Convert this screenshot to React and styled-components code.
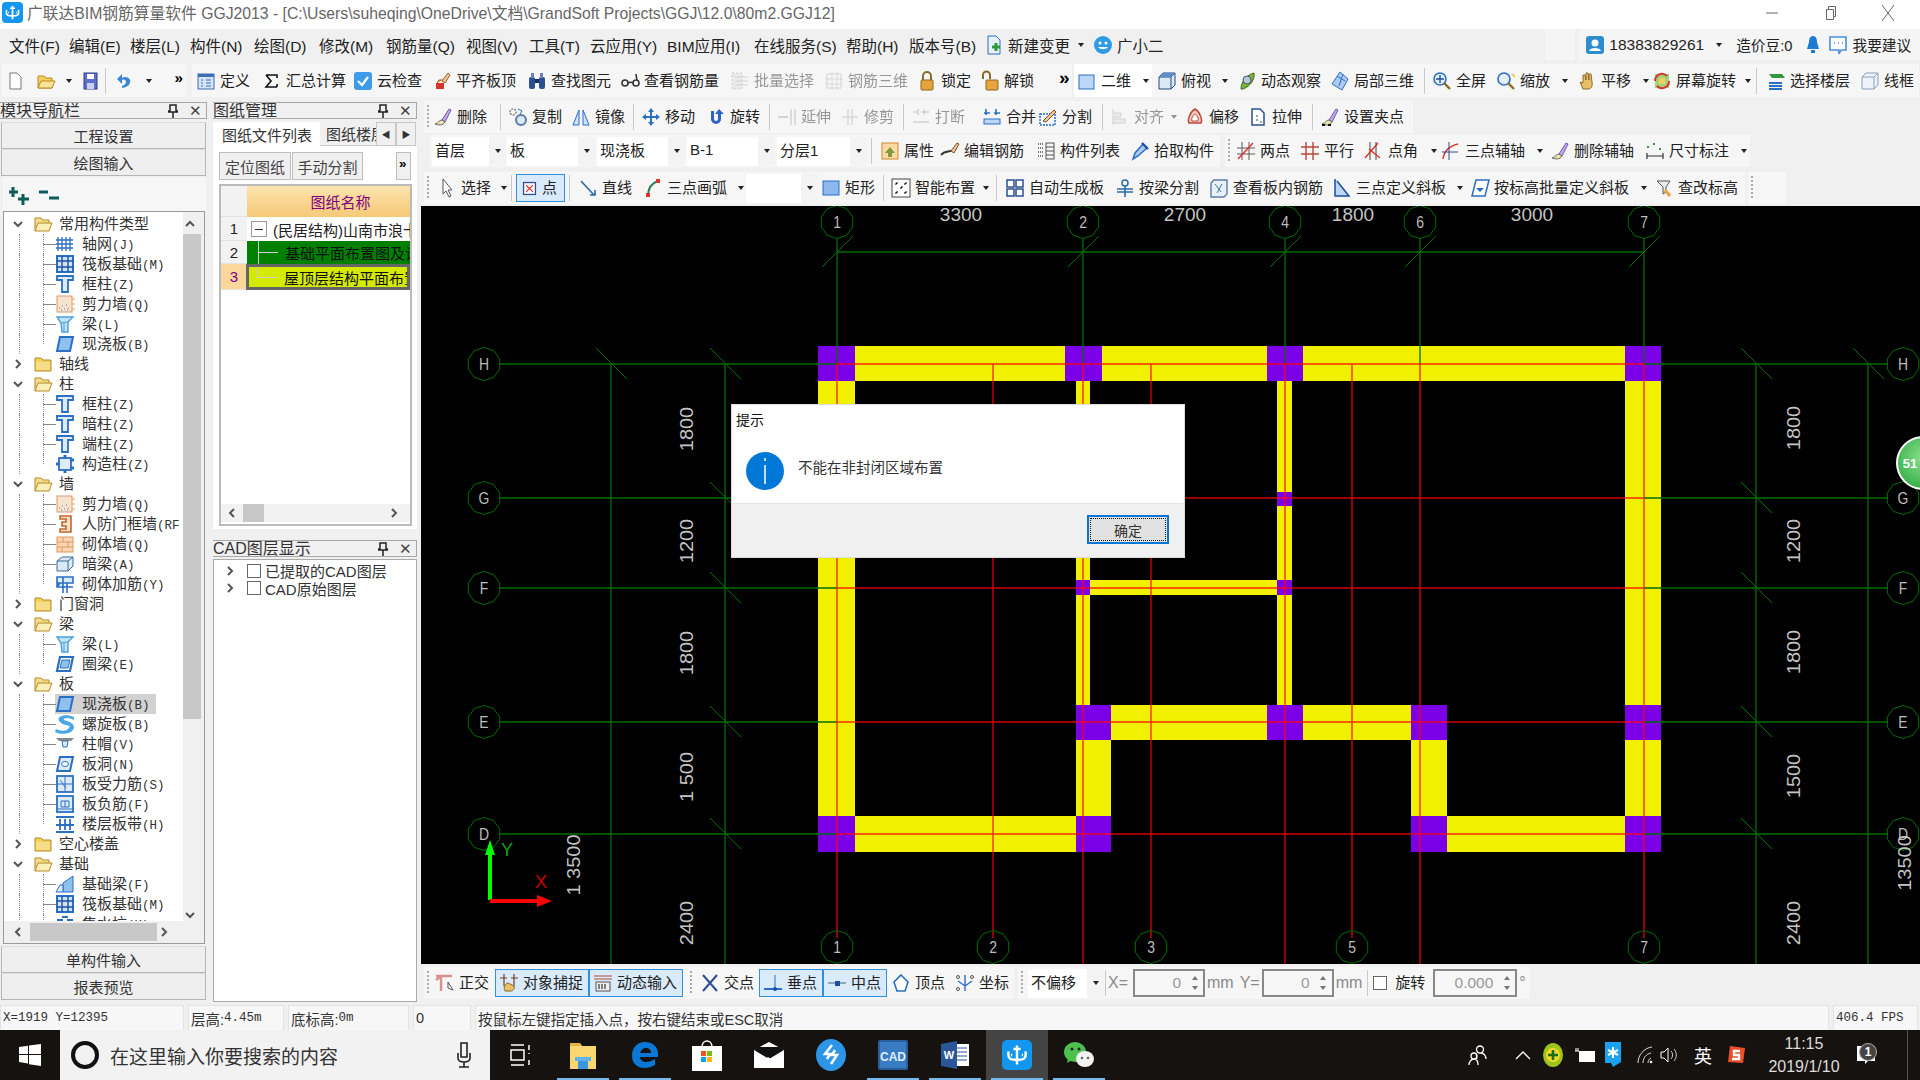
import styled, { createGlobalStyle } from "styled-components"

const GlobalStyle = createGlobalStyle`
html,body{margin:0;padding:0;width:1920px;height:1080px;overflow:hidden;background:#f0f0f0;}
body{font-family:"Liberation Sans","Noto Sans CJK SC",sans-serif;color:#222;font-size:15px;}
*{box-sizing:border-box;}
`

// ---------- icons ----------
const Bl = "#2b6fc4", Lb = "#8fc0ee", Db = "#1c4f9c", Or = "#e8a33a", Ye = "#f2cf5c", Gy = "#8a8a8a", Re = "#d9342b", Gn = "#2f9a3a"
const slab = <path d="M5 3h13l-3 14H2z" fill={Lb} stroke={Bl} strokeWidth="2" />
const grid = <path d="M3 3v14M7 3v14M11 3v14M15 3v14M1 6h17M1 10h17M1 14h17" stroke={Bl} strokeWidth="1.3" fill="none" />
const col = <path d="M2 2h16v4h-5v12H7V6H2z" fill="#dceaf9" stroke={Bl} strokeWidth="1.8" />
const shear = <g><rect x="2" y="2" width="15" height="16" fill="#f6e3d2" stroke="#d99a6a" /><path d="M4 14h1M7 12h1M9 15h1M11 11h1M13 14h1M6 16h1M12 16h1" stroke="#777" /><path d="M17 5h3M17 10h3M17 15h3" stroke={Or} /></g>
const beam = <g><path d="M2 3h16l-5 5v10H7l-1-9z" fill="#bfe3f7" stroke="#4aa0dc" strokeWidth="1.4" /><path d="M9 9v8M13 8L6 9" stroke="#4aa0dc" /></g>
const raft = <g><rect x="2" y="2" width="16" height="16" fill="#cfe2f7" stroke={Bl} strokeWidth="2" /><path d="M7 2v16M13 2v16M2 7h16M2 13h16" stroke={Db} strokeWidth="1.4" /></g>
const brush = <g><path d="M9 13L16 2l2 1-6 12z" fill="#c9a6e6" stroke="#6a5bb0" /><path d="M9 13c-3 0-3 3-7 4 3 1 8 2 10-2z" fill="#f0e6a8" stroke="#666" /></g>
const mag = <g><circle cx="8" cy="8" r="6" fill="#e5f0fb" stroke={Bl} strokeWidth="1.6" /><path d="M12 12l6 6" stroke="#8a6a2a" strokeWidth="2.4" /></g>

const icons = {
  doc: <path d="M5 2h7l4 4v12H5z" fill="#fff" stroke="#777" />,
  open: <g><path d="M2 17V5h6l2 2h6v10z" fill={Ye} stroke="#b78a20" /><path d="M2 17l3-7h14l-3 7z" fill="#f7e39a" stroke="#b78a20" /></g>,
  save: <g><rect x="4" y="2" width="13" height="16" fill="#5b6fc9" stroke="#2c3d92" /><rect x="7" y="3" width="7" height="5" fill="#fff" /><rect x="7" y="12" width="7" height="6" fill="#c8d0ee" /></g>,
  undo: <path d="M7 17c6-1 9-4 8-8-1-3-5-4-8-2V3L2 8l5 5V9c2-1 4 0 4 2s-2 3-4 4z" fill="#3d85d8" />,
  define: <g><rect x="2" y="3" width="16" height="15" fill="#d6e5f6" stroke="#3c6fb0" /><rect x="2" y="3" width="16" height="3" fill="#3c6fb0" /><path d="M10 9h5M10 12h5M10 15h5M5 9h2M5 12h2M5 15h2" stroke="#3c6fb0" /></g>,
  sigma: <path d="M4 4h11v3M15 16H4l5-6-5-6M15 13v3" fill="none" stroke="#111" strokeWidth="1.6" />,
  cloud: <g><rect x="1" y="1" width="18" height="18" rx="3" fill="#3d9be8" /><path d="M5 10l4 4 6-8" fill="none" stroke="#fff" strokeWidth="2.2" /></g>,
  align: <g><path d="M10 10l6-8 2 2-5 8z" fill="#e8c9a0" stroke="#a05a20" /><rect x="4" y="12" width="8" height="6" fill={Re} /><path d="M5 12l2-3h4" fill={Or} stroke="#a05a20" /></g>,
  binoc: <g><rect x="2" y="6" width="6" height="12" rx="2" fill="#2c4f8f" /><rect x="12" y="6" width="6" height="12" rx="2" fill="#2c4f8f" /><rect x="4" y="2" width="3" height="5" fill="#6a83b5" /><rect x="13" y="2" width="3" height="5" fill="#6a83b5" /><rect x="8" y="8" width="4" height="4" fill="#16305f" /></g>,
  glasses: <path d="M2 12a3 3 0 106 0 3 3 0 10-6 0M13 12a3 3 0 106 0 3 3 0 10-6 0M8 12c1-1 4-1 5 0M17 10l-1-7" fill="none" stroke="#333" strokeWidth="1.6" />,
  batch: <g><rect x="2" y="2" width="10" height="16" fill="#ddd" stroke="#999" strokeDasharray="2" /><path d="M5 6h13M5 10h13M5 14h13" stroke="#aaa" /></g>,
  rebar3d: <g><rect x="3" y="3" width="14" height="14" fill="none" stroke="#aaa" /><path d="M8 1v18M13 1v18M1 8h18M1 13h18" stroke="#bbb" /></g>,
  lock: <g><path d="M6 9V5a4 4 0 018 0v4" fill="none" stroke="#8a6a2a" strokeWidth="2" /><rect x="4" y="9" width="12" height="10" rx="1" fill={Or} stroke="#8a6a2a" /></g>,
  unlock: <g><path d="M3 8V4a3.5 3.5 0 017 0v4" fill="none" stroke="#8a6a2a" strokeWidth="2" /><rect x="6" y="9" width="12" height="10" rx="1" fill={Or} stroke="#8a6a2a" /></g>,
  more: <text x="3" y="13" fontSize="19" fontWeight="700" fontFamily="Liberation Sans">»</text>,
  square: <rect x="2" y="4" width="15" height="14" fill="#bcd6f5" stroke={Bl} />,
  topview: <g><path d="M2 6l4-4h12v12l-4 4H2z" fill="#dbe8f6" stroke="#274a7c" /><path d="M2 6h12v12M14 6l4-4" fill="none" stroke="#274a7c" /><path d="M2 6l4-4h12l-4 4z" fill="#5e8fc8" /></g>,
  orbit: <g><path d="M4 18C4 10 10 4 17 2c1 6-3 13-11 16z" fill="#79b43c" stroke="#3d6a22" /><circle cx="10" cy="9" r="4" fill="#b5c9dc" stroke="#555" /></g>,
  local3d: <g><path d="M10 1l8 7-6 11-10-6z" fill="#aecbed" stroke={Bl} /><path d="M7 5l8 5M13 3l-4 12" stroke={Bl} /></g>,
  full: <g>{mag}<path d="M8 4v8M4 8h8" stroke={Db} strokeWidth="1.4" /></g>,
  zoom: <g>{mag}<path d="M16 3l3 3" stroke={Ye} strokeWidth="2" /></g>,
  pan: <path d="M6 18l-3-7 3 1V4l2 0 1 5V2l2 0 1 7V3l2 0 1 8c1 4-1 7-4 7z" fill="#e7c069" stroke="#8a6a2a" />,
  rotate: <g><rect x="3" y="3" width="14" height="14" fill="#9fd27a" /><path d="M3 10a7 7 0 0112-5M17 10a7 7 0 01-12 5" fill="none" stroke={Re} strokeWidth="2" /><rect x="7" y="7" width="6" height="6" fill={Ye} /></g>,
  floor: <g><path d="M6 7h13L16 3H3z" fill={Gn} /><path d="M3 12h13M3 15h13M3 18h13" stroke={Bl} strokeWidth="2" /></g>,
  wire: <g><path d="M2 6l4-4h12v12l-4 4H2z" fill="#eef3f9" stroke="#8aa0bb" /><path d="M2 6h12v12M14 6l4-4" fill="none" stroke="#8aa0bb" /></g>,
  erase: brush,
  copy: <g><circle cx="5" cy="5" r="3" fill="none" stroke={Gy} strokeWidth="1.5" strokeDasharray="2 1" /><circle cx="13" cy="13" r="5" fill="#dbe8f6" stroke="#5b7ba5" strokeWidth="2" /><path d="M10 2l4 2-2 3" fill="none" stroke={Bl} /></g>,
  mirror: <g><path d="M2 18l6-15v15z" fill="#cfe2f7" stroke={Bl} /><path d="M18 18L12 3v15z" fill="#cfe2f7" stroke={Bl} /></g>,
  move: <path d="M10 1l3 4h-2v4h4V7l4 3-4 3v-2h-4v4h2l-3 4-3-4h2v-4H5v2l-4-3 4-3v2h4V5H7z" fill={Bl} />,
  rot: <path d="M5 4v8a5 5 0 0010 0V7h3l-5-5-4 5h3v5a2 2 0 01-4 0V4z" fill="#2d63c7" />,
  extend: <g><path d="M1 10h10" stroke="#aaa" strokeWidth="2" /><path d="M14 2v16M18 2v16" stroke="#aaa" strokeWidth="1.5" /></g>,
  trim: <path d="M2 10h16M8 2v16M12 2v16" stroke="#b5b5b5" strokeWidth="1.5" />,
  breakk: <path d="M2 5h5M10 5h8M2 15h16M7 2v6M13 2v6" stroke="#aaa" strokeWidth="1.6" />,
  merge: <g><path d="M4 2v6M14 2v6M2 6h6M12 6h6" stroke={Bl} strokeWidth="1.6" /><rect x="2" y="12" width="16" height="5" fill="#bcd6f5" stroke={Bl} /></g>,
  split: <g><rect x="2" y="7" width="15" height="11" fill="none" stroke={Bl} strokeDasharray="2 1" strokeWidth="1.5" /><path d="M5 14L16 3l2 2-10 10z" fill="#e8c9a0" stroke="#85521d" /></g>,
  alignL: <path d="M3 2v16M3 6h8v4H3M3 12h12v4H3" fill="#ddd" stroke="#aaa" />,
  offset: <g><path d="M10 2c4 2 8 10 6 14H4C2 12 6 4 10 2z" fill="#f5c7bd" stroke="#b8493a" strokeWidth="1.5" /><path d="M10 7c2 1 4 5 3 7H7c-1-2 1-6 3-7z" fill="#fff" stroke="#b8493a" /></g>,
  stretch: <g><path d="M4 2h8l4 4v12H4z" fill="#fff" stroke="#2c4f8f" strokeWidth="1.5" /><path d="M9 8v2M9 12v2M12 15h2" stroke="#2c4f8f" /></g>,
  grips: <g>{brush}<path d="M2 18h3M8 18h3" stroke="#111" strokeWidth="2" /></g>,
  prop: <g><rect x="2" y="2" width="16" height="16" fill="#fbd9a3" stroke="#d28a2a" /><path d="M5 12l5-6 5 6h-3v4H8v-4z" fill="#7e9c3a" /></g>,
  editbar: <g><path d="M1 14c4-5 8-2 15-6" fill="none" stroke="#333" strokeWidth="2" /><path d="M11 10l6-8 2 1-5 9z" fill="#e8c9a0" stroke="#85521d" /></g>,
  list: <g><path d="M2 3h5M2 7h5M2 11h5M2 15h5" stroke="#777" strokeDasharray="1 1" strokeWidth="2" /><rect x="10" y="2" width="8" height="16" fill="none" stroke="#555" /><path d="M10 6h8M10 10h8M10 14h8" stroke="#555" /></g>,
  pick: <g><path d="M3 18l2-6 8-9 4 4-9 8z" fill="#aecbed" stroke={Bl} strokeWidth="1.5" /><path d="M12 2l6 6" stroke={Db} strokeWidth="2.4" /></g>,
  twopt: <g><path d="M6 1v18M13 1v18M1 7h18M1 13h18" stroke="#5a5a5a" /><path d="M2 18L17 2" stroke={Re} strokeWidth="1.5" /></g>,
  parallel: <path d="M6 1v18M13 1v18M1 6h18M1 13h18" stroke="#b8493a" strokeWidth="1.4" />,
  angle: <g><path d="M6 1v18M12 1v18" stroke="#444" /><path d="M1 17L14 2M5 8l11 9" stroke={Re} strokeWidth="1.4" /></g>,
  arc3: <g><path d="M2 18C3 10 8 5 17 3" fill="none" stroke={Re} strokeWidth="1.4" /><path d="M8 1v18M1 11h16" stroke="#2c4f8f" /></g>,
  delaxis: brush,
  dim: <g><path d="M2 6h2M8 3h2M14 8h2" stroke={Gn} strokeWidth="2" /><path d="M2 12v6M18 12v6M2 15h16" stroke="#333" strokeWidth="1.2" /></g>,
  cursor: <path d="M6 1l0 15 3-3 3 6 2-1-3-6h4z" fill="#fff" stroke="#555" />,
  point: <g><rect x="3" y="3" width="14" height="14" fill="#fff" stroke="#2c4f8f" strokeWidth="1.5" /><path d="M6 6l8 8M14 6l-8 8" stroke={Re} strokeWidth="1.5" /></g>,
  line: <path d="M3 3l13 14M12 17h5v-5" fill="none" stroke="#2c6aa8" strokeWidth="1.6" />,
  arc: <g><path d="M5 18C5 10 9 5 15 3" fill="none" stroke="#2f7a55" strokeWidth="2" /><rect x="3" y="15" width="4" height="4" fill={Re} /><rect x="13" y="1" width="4" height="4" fill={Re} /></g>,
  rect: <rect x="2" y="3" width="16" height="14" fill="#8db8ee" stroke={Bl} />,
  smart: <g><rect x="1" y="1" width="18" height="18" fill="#fff" stroke="#444" /><path d="M5 5l1 1M14 5l1 1M5 14l1 1M14 14l1 1M10 9l1 1" stroke="#111" strokeWidth="3" /></g>,
  auto: <g><rect x="2" y="2" width="7" height="7" fill="#fff" stroke="#2c4f8f" strokeWidth="1.5" /><rect x="11" y="2" width="7" height="7" fill="#fff" stroke="#2c4f8f" strokeWidth="1.5" /><rect x="2" y="11" width="7" height="7" fill="#fff" stroke="#2c4f8f" strokeWidth="1.5" /><rect x="11" y="11" width="7" height="7" fill="#fff" stroke="#2c4f8f" strokeWidth="1.5" /></g>,
  beamsplit: <g><circle cx="10" cy="5" r="3" fill="none" stroke="#2c6aa8" strokeWidth="1.5" /><path d="M2 11h16M2 14h16M10 8v11" stroke="#2c6aa8" strokeWidth="1.6" /></g>,
  slabbar: <g><path d="M5 2h13v14l-3 3H2V5z" fill="#e9f0f8" stroke="#5b7ba5" strokeWidth="1.4" /><path d="M6 6l6 8M13 6l-5 9" stroke="#3c7aa0" /></g>,
  slope: <path d="M3 1v17h14L5 3" fill="#bcd6f5" stroke={Db} strokeWidth="1.5" />,
  slopebatch: <g><path d="M6 2h13l-4 16H2z" fill="#fff" stroke={Bl} strokeWidth="1.5" /><path d="M6 10h8l-4 4z" fill={Bl} /></g>,
  elev: <g><path d="M3 3h13l-4 6v5l-3 2V9z" fill="#e9ecef" stroke="#555" /><path d="M11 12l5 6" stroke={Or} strokeWidth="3" /></g>,
  ortho: <g><path d="M1 3h16M6 3v15M1 7l5-4" stroke="#d98f8a" strokeWidth="2.4" fill="none" /><path d="M13 9l5 8-5-2z" fill="#fff" stroke="#555" /></g>,
  osnap: <g><path d="M5 1v12M15 1v12M1 5h7M12 5h7" stroke="#7a3a2a" strokeWidth="1.2" /><path d="M6 18c-2-4 0-7 3-8l6 3c1 3-1 5-3 5z" fill="#e7c069" stroke="#8a6a2a" /></g>,
  dyn: <g><path d="M1 3h18M1 6h18" stroke="#b8493a" /><rect x="3" y="9" width="14" height="9" fill="#eee" stroke="#555" /><path d="M6 11v5M9 11v5M12 11v5" stroke="#111" /></g>,
  cross: <path d="M3 2l14 16M17 2L3 18" stroke="#2c4f8f" strokeWidth="2" />,
  perp: <g><path d="M1 16h18" stroke={Bl} strokeWidth="2" /><path d="M12 2v14" stroke={Bl} /><circle cx="12" cy="16" r="2" fill={Db} /></g>,
  mid: <g><path d="M1 10h18" stroke="#8ab" strokeWidth="2" /><rect x="8" y="8" width="5" height="5" fill={Db} /></g>,
  vertex: <g><path d="M10 2l7 7-3 9H6L3 9z" fill="#fff" stroke={Bl} strokeWidth="1.6" /></g>,
  coord: <g><path d="M10 2v16M3 8l7 5 7-5" fill="none" stroke={Bl} strokeWidth="1.4" /><circle cx="3" cy="4" r="1.5" fill="none" stroke="#555" /><circle cx="17" cy="4" r="1.5" fill="none" stroke="#555" /><circle cx="3" cy="16" r="1.5" fill="none" stroke="#555" /></g>,
  newchange: <g><path d="M4 1h8l4 4v14H4z" fill="#e8f1fa" stroke={Bl} /><path d="M8 12h8M12 8v8" stroke={Gn} strokeWidth="3" /></g>,
  xiaoer: <g><circle cx="10" cy="10" r="9" fill="#2f9be6" /><circle cx="7" cy="8" r="1.5" fill="#fff" /><circle cx="13" cy="8" r="1.5" fill="#fff" /><path d="M5 12c2 3 8 3 10 0" fill="#fff" /></g>,
  user: <g><rect x="1" y="1" width="18" height="18" rx="3" fill="#2d8ecb" /><circle cx="10" cy="8" r="3.5" fill="#fff" /><path d="M4 16c1-4 11-4 12 0z" fill="#fff" /></g>,
  bell: <path d="M10 1c3 0 4 3 4 6l2 7H4l2-7c0-3 1-6 4-6zM8 15h4v3H8z" fill="#1f7ad6" />,
  suggest: <g><path d="M2 2h16v13h-5l-2 4v-4H2z" fill="#fff" stroke="#4a8fdc" strokeWidth="1.6" /><path d="M6 8h1M10 8h1M14 8h1" stroke="#4a8fdc" strokeWidth="1.6" /></g>,
  // tree
  grid, raft, col, shear, beam, slab,
  struct: <g><rect x="4" y="4" width="12" height="12" fill="#dceaf9" stroke={Bl} strokeWidth="1.8" /><path d="M1 10h4M15 6h4M15 14h4M10 1v4M10 15v4" stroke={Bl} strokeWidth="3" /></g>,
  door: <path d="M5 2h11v16H5v-3h6v-3H7V8h4V5H5z" fill="#f4e2d0" stroke="#c6662a" strokeWidth="1.6" />,
  brick: <g><rect x="2" y="3" width="16" height="15" fill="#f7d6b5" stroke="#e09a5b" /><path d="M2 8h16M2 13h16M8 3v5M13 8v5M7 13v5" stroke="#e09a5b" /></g>,
  darkbeam: <g><path d="M2 7l5-4h11v9l-5 5H2z" fill="#dbe8f6" stroke="#3c6a9c" /><path d="M2 7h11v10M13 7l5-4" fill="none" stroke="#3c6a9c" /></g>,
  rebarwall: <path d="M2 3h16v6H2zM2 9v4h16M8 3v16M12 9v10M5 9l-3 4" fill="#dceaf9" stroke={Bl} strokeWidth="1.6" />,
  ring: <g><path d="M5 3h13l-3 14H2z" fill="#fff" stroke={Bl} strokeWidth="2.2" /><path d="M7 6h8l-2 8H5z" fill={Lb} stroke={Bl} /></g>,
  spiral: <path d="M19 3C9-1 0 3 5 8s12 2 9 6-9 3-13 1l-1 3c8 4 19 1 19-5S7 7 9 5s6-1 10 1z" fill="#4aa8e8" />,
  cap: <g><path d="M1 4h18l-3 3H4z" fill="#888" /><path d="M7 7h6l-1 6H8z" fill="#dceaf9" stroke={Bl} /></g>,
  hole: <g><path d="M5 3h13l-3 14H2z" fill="#dceaf9" stroke={Bl} strokeWidth="2" /><ellipse cx="10" cy="10" rx="3.5" ry="2.5" fill="#fff" stroke={Bl} /></g>,
  slabtop: <g><rect x="2" y="2" width="16" height="16" fill="#dceaf9" stroke={Bl} strokeWidth="1.8" /><path d="M10 2v16M2 10h16M5 6l6 8" stroke={Bl} /></g>,
  slabneg: <g><rect x="2" y="2" width="16" height="16" fill="#dceaf9" stroke={Bl} strokeWidth="1.8" /><path d="M6 7h8v6H6zM10 7v6M2 15h16" fill="none" stroke={Bl} /></g>,
  band: <path d="M1 3h18M1 18h18M5 5v11M10 5v11M15 5v11M1 11h18" stroke={Bl} strokeWidth="1.8" />,
  fbeam: <g><path d="M8 18V9l10-7v16z" fill="#8fc0ee" stroke={Bl} /><path d="M1 18l4-7h3v7z" fill="#dceaf9" stroke={Bl} /></g>,
  pit: <path d="M2 6h5v12M18 6h-5v12M7 3h6" stroke={Bl} strokeWidth="2" fill="none" />,
  folderOpen: <g><path d="M2 17V4h6l2 2h6v3" fill="#f3dc8f" stroke="#b78a20" /><path d="M2 17l3-8h14l-3 8z" fill="#fbeeb8" stroke="#b78a20" /></g>,
  folder: <g><path d="M2 4h6l2 2h8v11H2z" fill={Ye} stroke="#b78a20" /><rect x="3" y="8" width="14" height="8" fill="#f6dd87" /></g>,
}

const IconBox = styled.svg`
  width: ${p => p.$s || 20}px;
  height: ${p => p.$s || 20}px;
  flex-shrink: 0;
  overflow: visible;
`
const Ic = ({ n, s }) => <IconBox $s={s} viewBox="0 0 20 20">{icons[n]}</IconBox>

// the blue cross-like mark of the app, used in the title bar and on the taskbar
const AppMark = ({ s }) => (
  <svg width={s} height={s} viewBox="0 0 20 20"><path d="M10 2v16M3 7c-1 6 1 7 7 7s8-1 7-7M7 5h6M5 10h1M14 10h1" stroke="#fff" strokeWidth="2" fill="none" /></svg>
)

// ---------- shell ----------
const Page = styled.div`
  width: 1920px;
  height: 1080px;
  display: flex;
  flex-direction: column;
  background: #f0f0f0;
  overflow: hidden;
`
const TitleBar = styled.div`
  height: 29px;
  background: #fff;
  display: flex;
  align-items: center;
  padding: 0 3px 4px 2px;
  flex-shrink: 0;
`
const AppBadge = styled.div`
  width: 21px;
  height: 21px;
  background: #1296ef;
  border-radius: 4px;
  margin-right: 4px;
  display: flex;
  align-items: center;
  justify-content: center;
`
const TitleText = styled.div`
  font-size: 15.75px;
  color: #666;
  white-space: nowrap;
  flex: 1;
`
const WinBtn = styled.div`
  width: 58px;
  display: flex;
  justify-content: center;
  color: #666;
`
const MenuBar = styled.div`
  height: 35px;
  display: flex;
  align-items: center;
  flex-shrink: 0;
  padding: 0 0 4px 9px;
`
const MenuItem = styled.div`
  display: flex;
  align-items: center;
  font-size: ${p => p.$fs || 15.5}px;
  white-space: nowrap;
  width: ${p => (p.$w ? `${p.$w}px` : "auto")};
  margin-right: ${p => p.$gap ?? 0}px;
  gap: 4px;
  flex-shrink: 0;
`
const MenuRight = styled.div`
  display: flex;
  align-items: center;
  height: 30px;
  background: #f5f5f5;
  width: 341px;
  padding-left: 6px;
  flex-shrink: 0;
`
const MenuBlank = styled.div`
  height: 30px;
  width: 30px;
  background: #f5f5f5;
  margin-left: auto;
  margin-right: 4px;
  flex-shrink: 0;
`
const Row = styled.div`
  height: ${p => p.$h}px;
  padding-top: ${p => p.$pt || 0}px;
  display: flex;
  align-items: flex-start;
  flex-shrink: 0;
`
const Bar = styled.div`
  display: flex;
  align-items: center;
  height: ${p => p.$h || 32}px;
  width: ${p => p.$w}px;
  margin-left: ${p => p.$ml || 0}px;
  padding-left: ${p => p.$pl || 0}px;
  background: #f6f6f6;
  flex-shrink: 0;
  white-space: nowrap;
`
const ToolBox = styled.div`
  display: flex;
  align-items: center;
  height: 100%;
  width: ${p => p.$w}px;
  flex-shrink: 0;
  font-size: 15px;
  opacity: ${p => (p.$off ? 0.45 : 1)};
  filter: ${p => (p.$off ? "grayscale(1)" : "none")};
  background: ${p => (p.$white ? "#fff" : "transparent")};
  padding-left: ${p => p.$pl || 0}px;
  & > span { margin: -3px 0 0 4px; }
`
const Caret = styled.i`
  width: 0;
  height: 0;
  border-left: 3px solid transparent;
  border-right: 3px solid transparent;
  border-top: 4px solid #222;
  margin-left: ${p => p.$gap ?? 7}px;
  flex-shrink: 0;
`
const Sep = styled.i`
  width: 1px;
  height: 26px;
  background: #c9c9c9;
  flex-shrink: 0;
  margin: 0 ${p => p.$mr ?? 7}px 0 ${p => p.$ml ?? 0}px;
`
const Grip = styled.i`
  width: 2px;
  height: 24px;
  flex-shrink: 0;
  margin: 0 ${p => p.$mr ?? 4}px 0 3px;
  background: repeating-linear-gradient(to bottom, #aaa 0 2px, transparent 2px 4px);
`
const Toggle = styled.div`
  display: flex;
  align-items: center;
  height: 28px;
  width: ${p => p.$w}px;
  flex-shrink: 0;
  padding-left: ${p => p.$pl ?? 3}px;
  background: #d9eafa;
  border: 1.5px solid #2e90de;
  font-size: 15px;
  margin-left: ${p => p.$ml || 0}px;
  & > span { margin: -3px 0 0 4px; }
`
const SelectBox = styled.div`
  display: flex;
  align-items: center;
  justify-content: space-between;
  height: 29px;
  width: ${p => p.$w}px;
  background: #fff;
  padding-left: 3px;
  font-size: 15px;
  flex-shrink: 0;
  margin-left: ${p => p.$ml || 0}px;
  & > span { margin-top: -3px; }
`
const SelectArrow = styled.div`
  width: 17px;
  height: 100%;
  background: #f3f3f3;
  display: flex;
  align-items: center;
  justify-content: center;
`
const Select = ({ w, ml, children }) => (
  <SelectBox $w={w} $ml={ml}><span>{children}</span><SelectArrow><Caret $gap={0} /></SelectArrow></SelectBox>
)

// [x, icon, label, caretGap, off]
const tools = (list, end) => list.map((t, i) => {
  const next = i < list.length - 1 ? list[i + 1][0] : end
  return (
    <ToolBox key={t[2] || t[1]} $w={next - t[0]} $off={t[4]}>
      <Ic n={t[1]} />
      {t[2] && <span>{t[2]}</span>}
      {t[3] != null && <Caret $gap={t[3]} />}
    </ToolBox>
  )
})

// ---------- main columns ----------
const Body = styled.div`
  flex: 1;
  display: flex;
  min-height: 0;
`
const Panel = styled.div`
  width: ${p => p.$w}px;
  margin-left: ${p => p.$ml || 0}px;
  padding-bottom: ${p => p.$pb || 0}px;
  display: flex;
  flex-direction: column;
  flex-shrink: 0;
`
const PanelHead = styled.div`
  height: 17px;
  margin-top: ${p => p.$mt || 0}px;
  display: flex;
  align-items: center;
  font-size: 16px;
  line-height: 17px;
  background: #f0f0f0;
  border: 1px solid #a8a8a8;
  border-width: 1px 1px 1px 0;
  color: #333;
  overflow: hidden;
  white-space: nowrap;
  flex-shrink: 0;
  & > b { font-weight: 400; flex: 1; overflow: hidden; }
`
const HeadBtn = styled.span`
  width: 22px;
  display: flex;
  align-items: center;
  justify-content: center;
  font-size: 15px;
  color: #444;
`
const BigBtn = styled.div`
  height: 27px;
  margin: 0 1px 0 1px;
  background: #efefef;
  border: 1px solid #b5b5b5;
  border-top-color: #ddd;
  display: flex;
  align-items: center;
  justify-content: center;
  font-size: 15px;
  color: #333;
  flex-shrink: 0;
`
const PlusBar = styled.div`
  height: 34px;
  margin: 1px 1px 0 3px;
  background: #f6f6f6;
  display: flex;
  align-items: center;
  padding: 3px 0 0 6px;
  gap: 7px;
  flex-shrink: 0;
`
const TreeBox = styled.div`
  flex: 1;
  min-height: 0;
  margin: 0 2px 2px 3px;
  border: 1px solid #9a9a9a;
  display: grid;
  grid-template-columns: 179px 18px;
  grid-template-rows: 1fr 22px;
  padding-right: 2px;
  background: #f0f0f0;
`
const TreeList = styled.div`
  overflow: hidden;
  background: #fff;
  padding-top: 2px;
  position: relative;
`
const TreeRow = styled.div`
  height: 20px;
  position: relative;
  display: flex;
  align-items: center;
  padding-left: ${p => (p.$child ? 51 : 8)}px;
  font-size: 15px;
  line-height: 20px;
  color: #333;
  white-space: nowrap;
  &::before {
    content: "";
    display: ${p => (p.$child ? "block" : "none")};
    position: absolute;
    left: 15px;
    top: 0;
    bottom: 0;
    border-left: 1px dotted #888;
  }
  &::after {
    content: "";
    display: ${p => (p.$child ? "block" : "none")};
    position: absolute;
    left: 39px;
    top: 0;
    height: ${p => (p.$last ? 10 : 20)}px;
    width: 12px;
    border-left: 1px dotted #888;
    background: radial-gradient(circle, #888 .5px, transparent .6px) 0 9.5px / 2px 1px repeat-x;
  }
`
const Chevron = styled.svg`
  width: 12px;
  height: 12px;
  flex-shrink: 0;
  margin-right: 5px;
`
const TreeLabel = styled.div`
  display: flex;
  align-items: center;
  height: 20px;
  margin-left: ${p => (p.$folder ? 4 : 0)}px;
  padding-right: ${p => (p.$sel ? 6 : 0)}px;
  background: ${p => (p.$sel ? "#d2d2d2" : "transparent")};
  & > span { margin-left: ${p => (p.$folder ? 6 : 7)}px; }
`
const Code = styled.em`
  font: 12.5px "Liberation Mono", monospace;
`
const VScroll = styled.div`
  background: #f0f0f0;
  display: flex;
  flex-direction: column;
  align-items: center;
  padding-top: 6px;
  position: relative;
`
const Thumb = styled.div`
  background: #c8c8c8;
  width: ${p => p.$w || "100%"};
  height: ${p => p.$h || "100%"};
  margin: ${p => p.$m || 0};
  flex-shrink: 0;
`
const HScroll = styled.div`
  background: #f0f0f0;
  display: flex;
  align-items: center;
  padding: 0 ${p => p.$pr || 5}px 0 ${p => p.$pl || 5}px;
  justify-content: space-between;
`
const Spacer = styled.div`
  height: 3px;
  flex-shrink: 0;
`
const SpaceAuto = styled.div`
  flex: 1;
`
const Chev = ({ d }) => {
  const paths = { u: "M2 8l4-4 4 4", d: "M2 4l4 4 4-4", l: "M8 2L4 6l4 4", r: "M4 2l4 4-4 4" }
  return <Chevron viewBox="0 0 12 12"><path d={paths[d]} fill="none" stroke="#555" strokeWidth="2" /></Chevron>
}
const Pin = () => (
  <svg width="10" height="14" viewBox="0 0 10 14"><path d="M2 1h6v6h2v1H0V7h2zM5 8v6" fill="none" stroke="#222" strokeWidth="1.5" /></svg>
)

// drawings panel
const Tabs = styled.div`
  height: 24px;
  margin-top: 3px;
  display: flex;
  flex-shrink: 0;
  font-size: 15px;
  color: #333;
`
const Tab = styled.div`
  width: ${p => p.$w}px;
  display: flex;
  align-items: center;
  padding-left: ${p => p.$pl}px;
  background: ${p => (p.$on ? "#fff" : "#f0f0f0")};
  border-bottom: ${p => (p.$on ? "none" : "1px solid #ccc")};
  overflow: hidden;
  white-space: nowrap;
`
const ArrowBtn = styled.div`
  width: 20px;
  background: #f0f0f0;
  border: 1px solid #c8c8c8;
  display: flex;
  align-items: center;
  justify-content: center;
  font-size: 9px;
`
const DrawBody = styled.div`
  height: 383px;
  background: #fff;
  padding: 6px 5px 0 6px;
  flex-shrink: 0;
`
const DrawTools = styled.div`
  height: 28px;
  display: flex;
  margin-bottom: 4px;
`
const DrawBtn = styled.div`
  width: ${p => p.$w}px;
  margin-left: ${p => p.$ml || 0}px;
  background: #f0f0f0;
  border: 1px solid #bdbdbd;
  display: flex;
  align-items: center;
  justify-content: center;
  font-size: 15px;
  color: #444;
`
const Sheet = styled.div`
  height: 342px;
  border: 2px solid #bbb;
  display: flex;
  flex-direction: column;
  position: relative;
  overflow: hidden;
`
const SheetRow = styled.div`
  height: ${p => p.$h}px;
  display: grid;
  grid-template-columns: 26px 1fr;
  font-size: 15px;
  white-space: nowrap;
  flex-shrink: 0;
`
const NumCell = styled.div`
  display: flex;
  align-items: center;
  justify-content: center;
  background: ${p => p.$bg || "#f2f2f2"};
  color: ${p => p.$c || "#222"};
  border-bottom: 1px solid #e2e2e2;
`
const HeadCell = styled.div`
  background: linear-gradient(#fbe3ad, #f6c977);
  color: #800080;
  display: flex;
  align-items: center;
  justify-content: center;
  padding-left: 24px;
`
const NameCell = styled.div`
  display: flex;
  align-items: center;
  overflow: hidden;
  padding-left: ${p => p.$pl}px;
  background: ${p => p.$bg || "#fff"};
  color: ${p => p.$c || "#222"};
  border: ${p => (p.$focus ? "3px solid #666" : "none")};
  margin: ${p => (p.$focus ? "0 0 0 -1px" : "0")};
`
const TreeDash = styled.i`
  width: 20px;
  height: 1px;
  background: #cfcfcf;
  margin-right: 7px;
  margin-left: -27px;
  flex-shrink: 0;
  position: relative;
  &::before {
    content: "";
    position: absolute;
    left: 0;
    top: -14px;
    height: ${p => (p.$last ? 14 : 30)}px;
    width: 1px;
    background: #cfcfcf;
  }
`
const Minus = styled.i`
  width: 16px;
  height: 16px;
  border: 1px solid #999;
  background: #fff;
  display: flex;
  align-items: center;
  justify-content: center;
  margin-right: 6px;
  flex-shrink: 0;
  &::after { content: ""; width: 8px; height: 1px; background: #333; }
`
const SheetScroll = styled.div`
  position: absolute;
  left: 0;
  right: 0;
  bottom: 2px;
  height: 18px;
  display: flex;
  align-items: center;
  background: #f2f2f2;
  padding: 0 5px;
`
const CadBody = styled.div`
  flex: 1;
  margin-top: 2px;
  background: #fff;
  border: 1px solid #aaa;
  padding: 2px 0 0 10px;
  margin-bottom: 3px;
`
const CadRow = styled.div`
  height: 17.5px;
  display: flex;
  align-items: center;
  font-size: 15px;
  color: #333;
  white-space: nowrap;
`
const CheckBox = styled.i`
  width: 14px;
  height: 14px;
  border: 1px solid #666;
  background: #fff;
  margin: 0 4px 0 ${p => p.$ml || 0}px;
  flex-shrink: 0;
`

// work area
const Work = styled.div`
  width: 1499px;
  margin: -1px 0 0 4px;
  display: flex;
  flex-direction: column;
  flex-shrink: 0;
`
const Canvas = styled.div`
  width: 1499px;
  height: 758px;
  position: relative;
  background: #000;
  flex-shrink: 0;
  overflow: hidden;
`
const Plan = styled.svg`
  display: block;
  width: 1499px;
  height: 758px;
  & text { font-family: "Liberation Sans", sans-serif; }
`
const Dialog = styled.div`
  position: absolute;
  left: 311px;
  top: 199px;
  width: 452px;
  height: 152px;
  background: #fff;
  display: flex;
  flex-direction: column;
  box-shadow: 0 0 0 1px #ddd;
`
const DialogTitle = styled.div`
  height: 42px;
  padding: 4px 0 0 4px;
  font-size: 14px;
  line-height: 22px;
  color: #111;
`
const DialogBody = styled.div`
  height: 56px;
  display: flex;
  padding: 5px 0 0 14px;
  gap: 14px;
  font-size: 14.5px;
  color: #333;
  align-items: flex-start;
  line-height: 32px;
`
const InfoDot = styled.div`
  width: 38px;
  height: 38px;
  border-radius: 50%;
  background: #0078d7;
  color: #fff;
  display: flex;
  align-items: center;
  justify-content: center;
  flex-shrink: 0;
`
const DialogFoot = styled.div`
  flex: 1;
  background: #f0f0f0;
  border-top: 1px solid #e4e4e4;
  display: flex;
  align-items: center;
  justify-content: flex-end;
  padding-right: 15px;
`
const OkBtn = styled.div`
  width: 82px;
  height: 29px;
  margin-top: -2px;
  border: 2px solid #0078d7;
  background: #e1e1e1;
  outline: 1px dotted #111;
  outline-offset: -4px;
  display: flex;
  align-items: center;
  justify-content: center;
  font-size: 14px;
  color: #333;
`
const Spin = styled.div`
  width: ${p => p.$w}px;
  height: 28px;
  border: 2px solid #888;
  background: #f7f7f7;
  display: flex;
  align-items: center;
  justify-content: flex-end;
  font-size: 15.5px;
  color: #999;
  margin: 0 ${p => p.$mr ?? 2}px 0 ${p => p.$ml ?? 2}px;
  flex-shrink: 0;
  & > b { font-weight: 400; margin-right: 5px; }
`
const SpinArrows = styled.div`
  width: 17px;
  display: flex;
  flex-direction: column;
  align-items: center;
  gap: 6px;
  & > i { border: 3px solid transparent; }
  & > i:first-child { border-bottom: 4px solid #777; border-top: none; }
  & > i:last-child { border-top: 4px solid #777; border-bottom: none; }
`
const Gray = styled.span`
  color: #8a8a8a;
  font-size: 16px;
  flex-shrink: 0;
  margin-left: ${p => p.$ml || 0}px;
`

// status
const StatusBar = styled.div`
  height: 25px;
  display: flex;
  flex-shrink: 0;
`
const StatusCell = styled.div`
  width: ${p => p.$w}px;
  margin-left: ${p => p.$ml ?? 4}px;
  background: #f7f7f7;
  border: 1px solid #e3e3e3;
  border-width: 1px 1px 0 1px;
  display: flex;
  align-items: center;
  padding-left: 2px;
  font-size: 14.5px;
  color: #333;
  white-space: nowrap;
  overflow: hidden;
`
const Task = styled.div`
  height: 50px;
  display: flex;
  align-items: center;
  background: #16120f;
  flex-shrink: 0;
`
const StartBtn = styled.div`
  width: 60px;
  height: 50px;
  display: flex;
  align-items: center;
  justify-content: center;
`
const SearchBox = styled.div`
  width: 430px;
  height: 50px;
  background: #f2f2f2;
  display: flex;
  align-items: center;
  padding-left: 11px;
  font-size: 19px;
  color: #333;
`
const SearchRing = styled.i`
  width: 28px;
  height: 28px;
  border: 4px solid #111;
  border-radius: 50%;
  margin-right: 11px;
  flex-shrink: 0;
`
const MicWrap = styled.div`
  margin-left: auto;
  margin-right: 17px;
  display: flex;
  align-items: center;
`
const TaskItem = styled.div`
  width: ${p => p.$w || 62}px;
  height: 50px;
  display: flex;
  align-items: center;
  justify-content: center;
  flex-shrink: 0;
  position: relative;
  background: ${p => (p.$on ? "#444" : "transparent")};
  &::after {
    content: "";
    display: ${p => (p.$open ? "block" : "none")};
    position: absolute;
    left: 5px;
    right: 5px;
    bottom: 0;
    height: 2px;
    background: #76b9ed;
  }
`
const TrayIcon = styled.div`
  margin-left: ${p => p.$ml}px;
  width: 20px;
  height: 24px;
  display: flex;
  align-items: center;
  justify-content: center;
  color: #fff;
  font-size: 18px;
  flex-shrink: 0;
`
const Clock = styled.div`
  margin-left: 13px;
  width: 90px;
  color: #ddd;
  font-size: 16px;
  text-align: center;
  line-height: 23px;
  flex-shrink: 0;
`
const NotifyBadge = styled.b`
  position: absolute;
  left: 10px;
  top: 13px;
  width: 18px;
  height: 18px;
  border-radius: 50%;
  background: #444;
  border: 1px solid #aaa;
  color: #fff;
  font-size: 12px;
  display: flex;
  align-items: center;
  justify-content: center;
`
const DesktopEdge = styled.i`
  width: 1px;
  height: 50px;
  background: #555;
  margin-left: 24px;
`

// ---------- tree data ----------
const treeData = [
  ["常用构件类型", 1, [["grid", "轴网", "J"], ["raft", "筏板基础", "M"], ["col", "框柱", "Z"], ["shear", "剪力墙", "Q"], ["beam", "梁", "L"], ["slab", "现浇板", "B"]]],
  ["轴线", 0, []],
  ["柱", 1, [["col", "框柱", "Z"], ["col", "暗柱", "Z"], ["col", "端柱", "Z"], ["struct", "构造柱", "Z"]]],
  ["墙", 1, [["shear", "剪力墙", "Q"], ["door", "人防门框墙", "RF", 1], ["brick", "砌体墙", "Q"], ["darkbeam", "暗梁", "A"], ["rebarwall", "砌体加筋", "Y"]]],
  ["门窗洞", 0, []],
  ["梁", 1, [["beam", "梁", "L"], ["ring", "圈梁", "E"]]],
  ["板", 1, [["slab", "现浇板", "B", 0, 1], ["spiral", "螺旋板", "B"], ["cap", "柱帽", "V"], ["hole", "板洞", "N"], ["slabtop", "板受力筋", "S"], ["slabneg", "板负筋", "F"], ["band", "楼层板带", "H"]]],
  ["空心楼盖", 0, []],
  ["基础", 1, [["fbeam", "基础梁", "F"], ["raft", "筏板基础", "M"], ["pit", "集水坑", "K"]]],
]

const Tree = () => (
  <TreeList>
    {treeData.map(([name, open, kids]) => [
      <TreeRow key={name}>
        <Chev d={open ? "d" : "r"} />
        <TreeLabel $folder><Ic n={open ? "folderOpen" : "folder"} /><span>{name}</span></TreeLabel>
      </TreeRow>,
      ...kids.map((k, i) => (
        <TreeRow key={name + k[1]} $child $last={i === kids.length - 1}>
          <TreeLabel $sel={k[4]}>
            <Ic n={k[0]} />
            <span>{k[1]}<Code>({k[2]}{k[3] ? "" : ")"}</Code></span>
          </TreeLabel>
        </TreeRow>
      )),
    ])}
  </TreeList>
)

// ---------- plan drawing ----------
const GRN = "#006e00"
const AX = { 1: 837, 2: 993, b2: 1083, 3: 1151, 4: 1285, 5: 1352, 6: 1420, 7: 1644 }
const RY = { H: 364, G: 498, F: 588, E: 722, D: 834 }
const YEL = "#f0f000", PUR = "#7b00e8"
const yellow = [
  [855, 346, 210, 35], [1102, 346, 165, 35], [1303, 346, 322, 35],
  [818, 381, 37, 435], [1076, 381, 14, 324], [1277, 381, 15, 324], [1625, 381, 36, 324], [1625, 740, 36, 76],
  [1090, 580, 187, 15], [1111, 705, 156, 35], [1303, 705, 108, 35],
  [1076, 740, 35, 76], [1411, 740, 36, 76],
  [855, 816, 221, 36], [1447, 816, 178, 36],
]
const purple = [
  [818, 346, 37, 35], [1065, 346, 37, 35], [1267, 346, 36, 35], [1625, 346, 36, 35],
  [1277, 492, 15, 14], [1277, 580, 15, 15], [1076, 580, 14, 15],
  [1076, 705, 35, 35], [1267, 705, 36, 35], [1411, 705, 36, 35], [1625, 705, 36, 35],
  [818, 816, 37, 36], [1076, 816, 35, 36], [1411, 816, 36, 36], [1625, 816, 36, 36],
]
const decagon = (cx, cy, r) => Array.from({ length: 10 }, (_, i) => {
  const a = (Math.PI * 2 * i) / 10 + Math.PI / 10
  return `${(cx + r * Math.cos(a)).toFixed(1)},${(cy + r * Math.sin(a)).toFixed(1)}`
}).join(" ")

const PlanBubble = ({ x, y, t }) => (
  <g>
    <polygon points={decagon(x, y, 16.5)} fill="none" stroke={GRN} />
    <text transform={`translate(${x} ${y + 6}) scale(.82 1)`} textAnchor="middle" fontSize="17" fill="#bdbdbd">{t}</text>
  </g>
)
const DimV = ({ x, y, t }) => (
  <text transform={`translate(${x} ${y}) rotate(-90) scale(1 .95)`} textAnchor="middle" fontSize="20" fill="#c4c4c4">{t}</text>
)
const Tick = ({ x, y }) => <path d={`M${x - 15} ${y - 16}L${x + 16} ${y + 15}`} stroke={GRN} fill="none" />

const Drawing = () => (
  <Plan viewBox="421 206 1499 758">
    <defs>
      <radialGradient id="ball" cx=".5" cy=".4" r=".7"><stop offset="0" stopColor="#8ce08e" /><stop offset="1" stopColor="#27a83c" /></radialGradient>
    </defs>
    {yellow.map(r => <rect key={r.join()} x={r[0]} y={r[1]} width={r[2]} height={r[3]} fill={YEL} />)}
    {purple.map(r => <rect key={r.join()} x={r[0]} y={r[1]} width={r[2]} height={r[3]} fill={PUR} />)}

    {/* green axes */}
    <g stroke={GRN} fill="none" strokeWidth="1.3">
      {[AX[1], AX.b2, AX[4], AX[6], AX[7]].map(x => <path key={x} d={`M${x} 238V364`} />)}
      <path d="M837 252H1644" strokeWidth="1.6" />
      {Object.values(RY).map(y => <path key={y} d={`M500 ${y}H837M1644 ${y}H1888`} strokeWidth="1.6" />)}
      <path d="M611 364V964M725 364V964M1756 364V964M1868 364V964" />
    </g>
    {[AX[1], AX.b2, AX[4], AX[6], AX[7]].map(x => <path key={x} d={`M${x - 15} 267L${x + 16} 236`} stroke={GRN} />)}
    <Tick x={611} y={364} />
    {Object.values(RY).map(y => <Tick key={y} x={725} y={y} />)}
    {Object.values(RY).map(y => <Tick key={y} x={1756} y={y} />)}
    <Tick x={1868} y={364} />

    {/* red axes */}
    <g stroke="#ff0000" opacity=".82" fill="none" strokeWidth="1.4">
      {Object.values(RY).map(y => <path key={y} d={`M837 ${y}H1644`} />)}
      {[837, 993, 1151, 1352, 1644].map(x => <path key={x} d={`M${x} 364V938`} />)}
      {[1083, 1285, 1420].map(x => <path key={x} d={`M${x} 364V964`} />)}
    </g>

    {[[837, "1"], [1083, "2"], [1285, "4"], [1420, "6"], [1644, "7"]].map(([x, t]) => <PlanBubble key={t} x={x} y={222} t={t} />)}
    {[[837, "1"], [993, "2"], [1151, "3"], [1352, "5"], [1644, "7"]].map(([x, t]) => <PlanBubble key={t} x={x} y={947} t={t} />)}
    {Object.entries(RY).map(([t, y]) => <PlanBubble key={t} x={484} y={y} t={t} />)}
    {Object.entries(RY).map(([t, y]) => <PlanBubble key={t} x={1903} y={y} t={t} />)}

    {[[961, "3300"], [1185, "2700"], [1353, "1800"], [1532, "3000"]].map(([x, t]) => (
      <text key={t} x={x} y={221} textAnchor="middle" fontSize="19" fill="#c4c4c4">{t}</text>
    ))}
    {[[429, "1800"], [541, "1200"], [653, "1800"], [777, "1 500"], [923, "2400"]].map(([y, t]) => <DimV key={t} x={693} y={y} t={t} />)}
    {[[428, "1800"], [541, "1200"], [652, "1800"], [776, "1500"], [923, "2400"]].map(([y, t]) => <DimV key={t} x={1800} y={y} t={t} />)}
    <DimV x={580} y={865} t="1 3500" />
    <DimV x={1911} y={863} t="13500" />

    {/* coordinate marker */}
    <path d="M490 900V850" stroke="#00ff00" strokeWidth="4" />
    <path d="M490 840l-5 15h10z" fill="#00ff00" />
    <path d="M490 901H542" stroke="#ff0000" strokeWidth="4" />
    <path d="M552 901l-15-6v12z" fill="#ff0000" />
    <text x="501" y="856" fontSize="18" fill="#0fa50f">Y</text>
    <text x="535" y="888" fontSize="18" fill="#c80000">X</text>

    <circle cx="1923" cy="463" r="26" fill="url(#ball)" stroke="#fff" strokeWidth="2" />
    <text x="1910" y="468" textAnchor="middle" fontSize="13" fontWeight="700" fill="#fff">51</text>
  </Plan>
)

const menus = [["文件(F)", 60], ["编辑(E)", 61], ["楼层(L)", 60], ["构件(N)", 64], ["绘图(D)", 65], ["修改(M)", 67], ["钢筋量(Q)", 80], ["视图(V)", 63], ["工具(T)", 61], ["云应用(Y)", 77], ["BIM应用(I)", 87], ["在线服务(S)", 92], ["帮助(H)", 63], ["版本号(B)", 75]]

export default function App() {
  return (
    <Page>
      <GlobalStyle />
      <TitleBar>
        <AppBadge><AppMark s={17} /></AppBadge>
        <TitleText>广联达BIM钢筋算量软件 GGJ2013 - [C:\Users\suheqing\OneDrive\文档\GrandSoft Projects\GGJ\12.0\80m2.GGJ12]</TitleText>
        <WinBtn>
          <svg width="12" height="12" viewBox="0 0 12 12"><path d="M0 6h12" stroke="#666" /></svg>
        </WinBtn>
        <WinBtn>
          <svg width="12" height="14" viewBox="0 0 12 14"><path d="M2.5 3.5h7v10h-7zM4.5 3V.5h7v10H10" stroke="#666" fill="none" /></svg>
        </WinBtn>
        <WinBtn>
          <svg width="14" height="18" viewBox="0 0 14 18"><path d="M1 1l12 16M13 1L1 17" stroke="#666" fill="none" /></svg>
        </WinBtn>
      </TitleBar>

      <MenuBar>
        {menus.map(([m, w]) => <MenuItem key={m} $w={w}>{m}</MenuItem>)}
        <MenuItem $w={109}><Ic n="newchange" /><span>新建变更</span><Caret $gap={4} /></MenuItem>
        <MenuItem><Ic n="xiaoer" /><span>广小二</span></MenuItem>
        <MenuBlank />
        <MenuRight>
          <Ic n="user" />
          <MenuItem $gap={14}>&nbsp;18383829261<Caret $gap={8} /></MenuItem>
          <MenuItem $gap={11} $fs={14.7}>造价豆:0</MenuItem>
          <MenuItem $gap={5}><Ic n="bell" /></MenuItem>
          <MenuItem $fs={14.7}><Ic n="suggest" /><span>我要建议</span></MenuItem>
        </MenuRight>
      </MenuBar>

      <Row $h={38}>
        <Bar $w={185} $ml={2} $h={33} $pl={3}>
          {tools([[5, "doc"], [36, "open", null, 10], [80, "save"]], 105)}
          <Sep $mr={9} />
          {tools([[115, "undo", null, 11]], 172)}
          <Ic n="more" s={16} />
        </Bar>
        <Bar $w={880} $ml={5} $h={33} $pl={4}>
          {tools([[196, "define", "定义"], [262, "sigma", "汇总计算"], [353, "cloud", "云检查"], [432, "align", "平齐板顶"], [527, "binoc", "查找图元"], [620, "glasses", "查看钢筋量"], [730, "batch", "批量选择", null, 1], [824, "rebar3d", "钢筋三维", null, 1], [917, "lock", "锁定"], [980, "unlock", "解锁"], [1056, "more"]], 1072)}
        </Bar>
        <Bar $w={845} $ml={2} $h={33}>
          <ToolBox $w={78} $white $pl={3}><Ic n="square" /><span>二维</span><Caret $gap={12} /></ToolBox>
          <ToolBox $w={5} />
          {tools([[1157, "topview", "俯视", 11], [1237, "orbit", "动态观察"], [1330, "local3d", "局部三维"]], 1424)}
          <Sep $mr={7} />
          {tools([[1432, "full", "全屏"], [1496, "zoom", "缩放", 12], [1577, "pan", "平移", 12], [1652, "rotate", "屏幕旋转", 9]], 1756)}
          <Sep $mr={9} />
          {tools([[1766, "floor", "选择楼层"], [1860, "wire", "线框"]], 1915)}
        </Bar>
      </Row>

      <Body>
        <Panel $w={207} $pb={5}>
          <PanelHead>
            <b>模块导航栏</b>
            <HeadBtn><Pin /></HeadBtn><HeadBtn>✕</HeadBtn>
          </PanelHead>
          <Spacer />
          <BigBtn>工程设置</BigBtn>
          <BigBtn>绘图输入</BigBtn>
          <PlusBar>
            <svg width="22" height="20" viewBox="0 0 22 20"><path d="M4 1v10M0 6h9M14 8v11M9 13h11" stroke="#0d5c58" strokeWidth="3" fill="none" /></svg>
            <svg width="22" height="20" viewBox="0 0 22 20"><path d="M1 6h9M11 12h10" stroke="#0d5c58" strokeWidth="3" fill="none" /></svg>
          </PlusBar>
          <TreeBox>
            <Tree />
            <VScroll>
              <Chev d="u" />
              <Thumb $h="485px" $m="4px 0 0" />
              <SpaceAuto />
              <Chev d="d" />
            </VScroll>
            <HScroll $pl={8} $pr={8}>
              <Chev d="l" />
              <Thumb $w="127px" $h="18px" />
              <Chev d="r" />
            </HScroll>
            <span />
          </TreeBox>
          <BigBtn>单构件输入</BigBtn>
          <BigBtn>报表预览</BigBtn>
        </Panel>

        <Panel $w={204} $ml={6}>
          <PanelHead>
            <b>图纸管理</b>
            <HeadBtn><Pin /></HeadBtn><HeadBtn>✕</HeadBtn>
          </PanelHead>
          <Tabs>
            <Tab $on $w={107} $pl={9}>图纸文件列表</Tab>
            <Tab $w={56} $pl={6}>图纸楼层</Tab>
            <ArrowBtn>◀</ArrowBtn>
            <ArrowBtn>▶</ArrowBtn>
          </Tabs>
          <DrawBody>
            <DrawTools>
              <DrawBtn $w={72}>定位图纸</DrawBtn>
              <DrawBtn $w={71} $ml={1}>手动分割</DrawBtn>
              <DrawBtn $w={15} $ml={33}><Ic n="more" s={14} /></DrawBtn>
            </DrawTools>
            <Sheet>
              <SheetRow $h={31}><NumCell /><HeadCell>图纸名称</HeadCell></SheetRow>
              <SheetRow $h={24}>
                <NumCell>1</NumCell>
                <NameCell $pl={4}><Minus />(民居结构)山南市浪卡子县</NameCell>
              </SheetRow>
              <SheetRow $h={23}>
                <NumCell>2</NumCell>
                <NameCell $pl={38} $bg="#008000" $c="#111"><TreeDash />基础平面布置图及说明</NameCell>
              </SheetRow>
              <SheetRow $h={26}>
                <NumCell $bg="#fbd79b" $c="#800080">3</NumCell>
                <NameCell $pl={35} $bg="#d4ea00" $c="#111" $focus><TreeDash $last />屋顶层结构平面布置图</NameCell>
              </SheetRow>
              <SheetScroll>
                <Chev d="l" />
                <Thumb $w="21px" $h="18px" />
                <SpaceAuto />
                <Chev d="r" />
              </SheetScroll>
            </Sheet>
          </DrawBody>
          <PanelHead $mt={11}>
            <b>CAD图层显示</b>
            <HeadBtn><Pin /></HeadBtn><HeadBtn>✕</HeadBtn>
          </PanelHead>
          <CadBody>
            <CadRow><Chev d="r" /><CheckBox $ml={6} />已提取的CAD图层</CadRow>
            <CadRow><Chev d="r" /><CheckBox $ml={6} />CAD原始图层</CadRow>
          </CadBody>
        </Panel>

        <Work>
          <Row $h={34}>
            <Bar $w={989} $ml={3}>
              <Grip />
              {tools([[433, "erase", "删除"]], 500)}
              <Sep />
              {tools([[508, "copy", "复制"], [571, "mirror", "镜像"]], 633)}
              <Sep />
              {tools([[641, "move", "移动"], [706, "rot", "旋转"]], 769)}
              <Sep />
              {tools([[777, "extend", "延伸", null, 1], [840, "trim", "修剪", null, 1]], 903)}
              <Sep />
              {tools([[911, "breakk", "打断", null, 1], [982, "merge", "合并"], [1038, "split", "分割"]], 1102)}
              <Sep />
              {tools([[1110, "alignL", "对齐", 7, 1], [1185, "offset", "偏移"], [1248, "stretch", "拉伸"]], 1312)}
              <Sep />
              {tools([[1320, "grips", "设置夹点"]], 1404)}
            </Bar>
          </Row>
          <Row $h={36}>
            <Bar $w={790} $ml={9} $pl={2}>
              <Select w={74}>首层</Select>
              <Select w={88} ml={1}>板</Select>
              <Select w={88} ml={2}>现浇板</Select>
              <Select w={88} ml={2}>B-1</Select>
              <Select w={90} ml={2}>分层1</Select>
              <Sep $ml={4} $mr={8} />
              {tools([[880, "prop", "属性"], [940, "editbar", "编辑钢筋"], [1036, "list", "构件列表"], [1130, "pick", "拾取构件"]], 1218)}
            </Bar>
            <Bar $w={525} $ml={5}>
              <Grip $mr={6} />
              {tools([[1236, "twopt", "两点"], [1300, "parallel", "平行"], [1364, "angle", "点角", 13], [1441, "arc3", "三点辅轴", 12], [1550, "delaxis", "删除辅轴"], [1645, "dim", "尺寸标注", 12]], 1750)}
            </Bar>
          </Row>
          <Row $h={35} $pt={1}>
            <Bar $w={1321} $ml={3}>
              <Grip $mr={8} />
              {tools([[437, "cursor", "选择", 10]], 511)}
              <Sep $mr={4} />
              <Toggle $w={49} $pl={4}><Ic n="point" s={17} /><span>点</span></Toggle>
              <Sep $ml={4} $mr={8} />
              {tools([[578, "line", "直线"], [643, "arc", "三点画弧", 11]], 746)}
              <Select w={72}>{" "}</Select>
              <ToolBox $w={3} />
              {tools([[821, "rect", "矩形"]], 883)}
              <Sep />
              {tools([[891, "smart", "智能布置", 8]], 996)}
              <Sep $mr={8} />
              {tools([[1005, "auto", "自动生成板"], [1115, "beamsplit", "按梁分割"], [1209, "slabbar", "查看板内钢筋"], [1332, "slope", "三点定义斜板", 11], [1470, "slopebatch", "按标高批量定义斜板", 12], [1654, "elev", "查改标高"]], 1740)}
            </Bar>
            <Bar $w={38} $ml={3}><Grip /></Bar>
          </Row>
          <Canvas>
            <Drawing />
            <Dialog>
              <DialogTitle>提示</DialogTitle>
              <DialogBody>
                <InfoDot>
                  <svg width="6" height="26" viewBox="0 0 6 26"><path d="M3 0v3M3 7v19" stroke="#fff" strokeWidth="1.5" /></svg>
                </InfoDot>
                不能在非封闭区域布置
              </DialogBody>
              <DialogFoot><OkBtn>确定</OkBtn></DialogFoot>
            </Dialog>
          </Canvas>
          <Row $h={41} $pt={3}>
            <Bar $w={263} $ml={3}>
              <Grip $mr={6} />
              <ToolBox $w={60}><Ic n="ortho" /><span>正交</span></ToolBox>
              <Toggle $w={94}><Ic n="osnap" /><span>对象捕捉</span></Toggle>
              <Toggle $w={94}><Ic n="dyn" /><span>动态输入</span></Toggle>
            </Bar>
            <Bar $w={327}>
              <Grip $mr={8} />
              <ToolBox $w={59}><Ic n="cross" /><span>交点</span></ToolBox>
              <Toggle $w={64}><Ic n="perp" /><span>垂点</span></Toggle>
              <Toggle $w={64}><Ic n="mid" /><span>中点</span></Toggle>
              <ToolBox $w={4} />
              {tools([[891, "vertex", "顶点"], [955, "coord", "坐标"]], 1014)}
            </Bar>
            <Bar $w={512} $ml={4}>
              <Grip $mr={5} />
              <Select w={76}>不偏移</Select>
              <Sep $ml={1} $mr={2} />
              <Gray>X=</Gray>
              <Spin $w={72} $ml={5}><b>0</b><SpinArrows><i /><i /></SpinArrows></Spin>
              <Gray>mm</Gray>
              <Gray $ml={6}>Y=</Gray>
              <Spin $w={72}><b>0</b><SpinArrows><i /><i /></SpinArrows></Spin>
              <Gray>mm</Gray>
              <Sep $ml={5} $mr={5} />
              <CheckBox />
              <ToolBox $w={40}><span>旋转</span></ToolBox>
              <Spin $w={84}><b>0.000</b><SpinArrows><i /><i /></SpinArrows></Spin>
              <Gray>°</Gray>
            </Bar>
          </Row>
        </Work>
      </Body>

      <StatusBar>
        <StatusCell $w={184} $ml={0}><Code>X=1919 Y=12395</Code></StatusCell>
        <StatusCell $w={96}>层高:<Code>4.45m</Code></StatusCell>
        <StatusCell $w={121}>底标高:<Code>0m</Code></StatusCell>
        <StatusCell $w={58}>0</StatusCell>
        <StatusCell $w={1354}>按鼠标左键指定插入点，按右键结束或ESC取消</StatusCell>
        <StatusCell $w={85}><Code>406.4 FPS</Code></StatusCell>
      </StatusBar>

      <Task>
        <StartBtn>
          <svg width="22" height="22" viewBox="0 0 22 22"><path d="M0 3l9-1.3V10H0zM10 1.5L22 0v10H10zM0 11h9v8.5L0 18zM10 11h12v11l-12-1.7z" fill="#fff" /></svg>
        </StartBtn>
        <SearchBox>
          <SearchRing />
          在这里输入你要搜索的内容
          <MicWrap>
            <svg width="18" height="26" viewBox="0 0 18 26"><path d="M6 1h6v14H6zM3 11v5c0 3 3 4 6 4s6-1 6-4v-5M9 20v5M4 25h10" fill="none" stroke="#222" strokeWidth="1.6" /></svg>
          </MicWrap>
        </SearchBox>
        <TaskItem>
          <svg width="22" height="22" viewBox="0 0 22 22"><path d="M1 1h13M1 21h13M1 6h13v10H1zM19 1v5M19 9v1M19 16v5" stroke="#fff" fill="none" strokeWidth="1.5" /></svg>
        </TaskItem>
        <TaskItem $open>
          <svg width="28" height="30" viewBox="0 0 28 30"><path d="M1 3h10l2 3h14v23H1z" fill="#f9d66f" /><path d="M1 3h10v3H1z" fill="#e3b13b" /><rect x="9" y="17" width="10" height="12" fill="#3a96dd" /><rect x="6" y="17" width="16" height="4" fill="#5fb4ec" /></svg>
        </TaskItem>
        <TaskItem $open>
          <svg width="26" height="28" viewBox="0 0 26 28"><path d="M13 1C5 1 0 7 0 15c0 8 6 12 12 12 4 0 8-1 11-3v-6c-3 2-6 3-9 3-3 0-6-2-6-5h18c1-9-4-15-13-15zM8 12c1-3 3-5 6-5s5 2 5 5z" fill="#0a78d4" /></svg>
        </TaskItem>
        <TaskItem>
          <svg width="30" height="32" viewBox="0 0 30 32"><path d="M10 8c0-8 10-8 10 0" fill="none" stroke="#fff" strokeWidth="1.5" /><rect y="7" width="30" height="25" fill="#fff" /><rect x="9" y="12" width="5" height="5" fill="#f25022" /><rect x="15" y="12" width="5" height="5" fill="#7fba00" /><rect x="9" y="18" width="5" height="5" fill="#00a4ef" /><rect x="15" y="18" width="5" height="5" fill="#ffb900" /></svg>
        </TaskItem>
        <TaskItem>
          <svg width="30" height="26" viewBox="0 0 30 26"><path d="M0 8L15 0l15 8v18H0z" fill="#fff" /><path d="M0 8l15 9 15-9-4-3H4z" fill="#111" /><path d="M0 26l14-11 16 11z" fill="#fff" /></svg>
        </TaskItem>
        <TaskItem>
          <svg width="30" height="32" viewBox="0 0 30 32"><ellipse cx="15" cy="16" rx="15" ry="16" fill="#2d95e8" /><path d="M16 6l-7 9h5l-3 5M15 25l6-9h-5l3-5" fill="none" stroke="#fff" strokeWidth="2.5" /></svg>
        </TaskItem>
        <TaskItem $open>
          <svg width="30" height="30" viewBox="0 0 30 30"><rect width="30" height="30" rx="2" fill="#2a5f9e" /><rect x="2" y="2" width="26" height="26" fill="#3a7cc4" /><text x="15" y="21" textAnchor="middle" fontSize="12" fontWeight="700" fill="#dfeeff" fontFamily="Liberation Sans">CAD</text></svg>
        </TaskItem>
        <TaskItem $open>
          <svg width="28" height="28" viewBox="0 0 28 28"><rect x="12" y="3" width="16" height="22" fill="#fff" /><path d="M15 7h11M15 11h11M15 15h11M15 19h11" stroke="#2b579a" /><path d="M0 3l16-3v28L0 25z" fill="#2b579a" /><text x="8" y="18" textAnchor="middle" fontSize="11" fontWeight="700" fill="#fff" fontFamily="Liberation Sans">W</text></svg>
        </TaskItem>
        <TaskItem $open $on>
          <svg width="30" height="30" viewBox="0 0 30 30"><rect width="30" height="30" rx="5" fill="#1296ef" /><svg x="3" y="3" width="24" height="24" viewBox="0 0 20 20"><path d="M10 2v16M3 7c-1 6 1 7 7 7s8-1 7-7M7 5h6M5 10h1M14 10h1" stroke="#fff" strokeWidth="2" fill="none" /></svg></svg>
        </TaskItem>
        <TaskItem $open>
          <svg width="30" height="28" viewBox="0 0 30 28"><ellipse cx="11" cy="11" rx="11" ry="10" fill="#4ec04e" /><path d="M4 17l-1 5 5-3z" fill="#4ec04e" /><ellipse cx="21" cy="18" rx="9" ry="8" fill="#f2f2f2" /><circle cx="18" cy="17" r="1.3" fill="#666" /><circle cx="24" cy="17" r="1.3" fill="#666" /><circle cx="8" cy="8" r="1.5" fill="#222" /><circle cx="15" cy="8" r="1.5" fill="#222" /></svg>
        </TaskItem>

        <TrayIcon $ml={358}>
          <svg width="20" height="22" viewBox="0 0 20 22"><path d="M12 2a3.5 3.5 0 110 7 3.5 3.5 0 010-7zM6 9a3 3 0 110 6 3 3 0 010-6zM8 9l1 6M13 9c3 0 5 3 5 6M1 21c0-3 2-6 5-6s4 3 4 6" fill="none" stroke="#fff" strokeWidth="1.3" /></svg>
        </TrayIcon>
        <TrayIcon $ml={25}>
          <svg width="16" height="9" viewBox="0 0 16 9"><path d="M1 8l7-7 7 7" fill="none" stroke="#fff" strokeWidth="1.3" /></svg>
        </TrayIcon>
        <TrayIcon $ml={10}>
          <svg width="20" height="24" viewBox="0 0 20 24"><ellipse cx="10" cy="12" rx="10" ry="12" fill="#9ec31c" /><circle cx="10" cy="12" r="7" fill="#f2d927" /><path d="M10 7v10M5 12h10" stroke="#1c6e1c" strokeWidth="2.6" /></svg>
        </TrayIcon>
        <TrayIcon $ml={12}>
          <svg width="20" height="16" viewBox="0 0 20 16"><rect x="4" y="4" width="16" height="11" fill="#fff" /><path d="M0 4h4M1 1v3M3 1v3" stroke="#fff" /></svg>
        </TrayIcon>
        <TrayIcon $ml={8}>
          <svg width="18" height="26" viewBox="0 0 18 26"><path d="M1 0h16v20l-8 5-2-4H1z" fill="#1aa1f1" /><path d="M9 5v11M4 8l10 5M14 8L4 13" stroke="#fff" strokeWidth="2" /></svg>
        </TrayIcon>
        <TrayIcon $ml={12}>
          <svg width="18" height="18" viewBox="0 0 18 18"><path d="M2 17C2 9 8 2 16 1M7 17c0-5 3-9 8-10M12 17c0-2 1-4 3-5" fill="none" stroke="#ddd" /><circle cx="15" cy="16" r="1.3" fill="#fff" /></svg>
        </TrayIcon>
        <TrayIcon $ml={5}>
          <svg width="20" height="18" viewBox="0 0 20 18"><path d="M1 6h3l4-4v14l-4-4H1z" fill="none" stroke="#fff" /><path d="M11 5c2 2 2 6 0 8M14 3c3 3 3 9 0 12" fill="none" stroke="#ccc" /></svg>
        </TrayIcon>
        <TrayIcon $ml={13}>英</TrayIcon>
        <TrayIcon $ml={13}>
          <svg width="20" height="20" viewBox="0 0 20 20"><path d="M4 1l15 2-2 15-15-1z" fill="#e9502a" /><path d="M14 6H8v4h5v4H6" fill="none" stroke="#fff" strokeWidth="2.4" /></svg>
        </TrayIcon>
        <Clock>11:15<br />2019/1/10</Clock>
        <TaskItem $w={34}>
          <svg width="22" height="22" viewBox="0 0 22 22"><path d="M2 2h18v15h-7l-3 3v-3H2z" fill="#fff" /><path d="M5 6h12M5 9h12M5 12h8" stroke="#222" /></svg>
          <NotifyBadge>1</NotifyBadge>
        </TaskItem>
        <DesktopEdge />
      </Task>
    </Page>
  )
}
